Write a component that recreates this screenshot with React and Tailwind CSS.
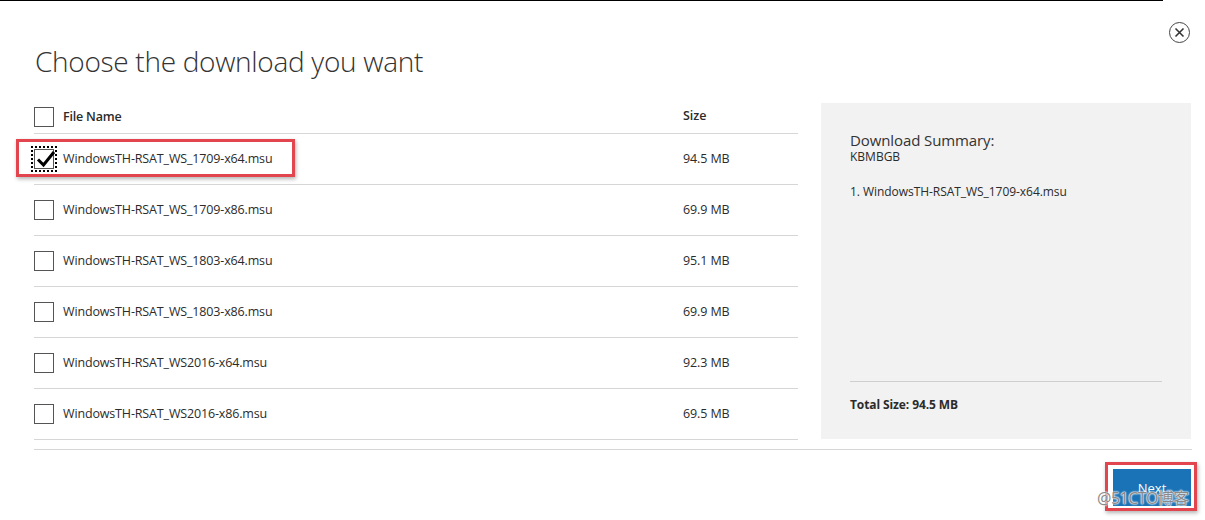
import React from "react";

const files = [
  { name: "WindowsTH-RSAT_WS_1709-x64.msu", size: "94.5 MB", checked: true },
  { name: "WindowsTH-RSAT_WS_1709-x86.msu", size: "69.9 MB" },
  { name: "WindowsTH-RSAT_WS_1803-x64.msu", size: "95.1 MB" },
  { name: "WindowsTH-RSAT_WS_1803-x86.msu", size: "69.9 MB" },
  { name: "WindowsTH-RSAT_WS2016-x64.msu", size: "92.3 MB" },
  { name: "WindowsTH-RSAT_WS2016-x86.msu", size: "69.5 MB" },
];

function Checkbox({ checked }) {
  if (checked) {
    return (
      <span className="relative w-5 h-5 shrink-0 border border-[#555] bg-white outline-2 outline-dotted outline-black outline-offset-1">
        <svg className="absolute left-[1px] top-[0px]" width="20" height="18" viewBox="0 0 20 18">
          <path d="M2 9.5 L7.5 15 L18 2" fill="none" stroke="#000" strokeWidth="3" />
        </svg>
      </span>
    );
  }
  return <span className="w-5 h-5 shrink-0 border border-[#555] bg-white" />;
}

export default function App() {
  return (
    <div className="relative w-[1205px] h-[520px] bg-white overflow-hidden font-['Open_Sans',sans-serif] text-[#2b2b2b]">
      {/* top edge */}
      <div className="w-[1163px] h-px bg-black" />

      {/* title + close */}
      <div className="flex justify-between items-start pl-[35px] pr-[15px]">
        <h1 className="mt-[40px] text-[28px] leading-[40px] font-light tracking-[-0.3px] text-[#333]">
          Choose the download you want
        </h1>
        <button className="mt-[21px] w-[21px] h-[21px] rounded-full border-[1.5px] border-[#444] flex items-center justify-center">
          <svg width="11" height="11" viewBox="0 0 11 11">
            <path d="M1.5 1.5 L9.5 9.5 M9.5 1.5 L1.5 9.5" stroke="#333" strokeWidth="1.6" />
          </svg>
        </button>
      </div>

      {/* main */}
      <div className="flex items-start gap-[23px] pl-[34px] mt-[22px]">
        <div className="w-[764px]">
          <div className="flex items-center h-[31px] border-b border-[#d6d6d6]">
            <div className="flex items-center gap-[9px] w-[649px] -mt-[2px]">
              <Checkbox />
              <span className="text-[12.5px] font-semibold tracking-[-0.2px]">File Name</span>
            </div>
            <span className="text-[12.5px] font-semibold -mt-[4px]">Size</span>
          </div>
          {files.map((f) => (
            <div key={f.name} className="flex items-center h-[51px] border-b border-[#d6d6d6]">
              <div className="flex items-center gap-[9px] w-[649px]">
                <Checkbox checked={f.checked} />
                <span className="text-[12.5px] tracking-[-0.15px]">{f.name}</span>
              </div>
              <span className="text-[12.5px] tracking-[-0.1px]">{f.size}</span>
            </div>
          ))}
        </div>

        <div className="w-[370px] h-[336px] bg-[#f2f2f2] px-[29px] pt-[28px] flex flex-col">
          <p className="text-[15px] leading-[18px] text-[#333] tracking-[-0.1px]">Download Summary:</p>
          <p className="text-[12px] leading-[16px]">KBMBGB</p>
          <p className="mt-[18px] text-[12px] tracking-[-0.05px]">1. WindowsTH-RSAT_WS_1709-x64.msu</p>
          <div className="mt-auto border-t border-[#cfcfcf] pt-[14px] pb-[25px]">
            <p className="text-[12px] font-bold tracking-[-0.1px]">Total Size: 94.5 MB</p>
          </div>
        </div>
      </div>

      <div className="ml-[34px] mt-[9px] w-[1158px] h-px bg-[#d6d6d6]" />

      <div className="flex justify-end pr-[14px] mt-[19px]">
        <button className="w-[78px] h-[37px] bg-[#1a73b6] text-white text-[13px] pt-[3px]">Next</button>
      </div>

      {/* highlight boxes */}
      <div className="absolute left-[16px] top-[139px] w-[279px] h-[38px] border-[3px] border-[#e2454d] shadow-[1px_2px_4px_rgba(0,0,0,0.3)]" />
      <div className="absolute left-[1105px] top-[462px] w-[92px] h-[49px] border-[3px] border-[#e2454d] shadow-[1px_2px_4px_rgba(0,0,0,0.3)]" />

      {/* watermark */}
      <span className="absolute left-[1097px] top-[489px] text-[16px] leading-[18px] text-[#8a8a8a] tracking-[-0.5px] font-['Noto_Sans','Noto_Sans_CJK_SC',sans-serif] [text-shadow:0_0_2px_#fff,0_0_2px_#fff,0_0_1px_#fff]">
        @51CTO博客
      </span>
    </div>
  );
}
